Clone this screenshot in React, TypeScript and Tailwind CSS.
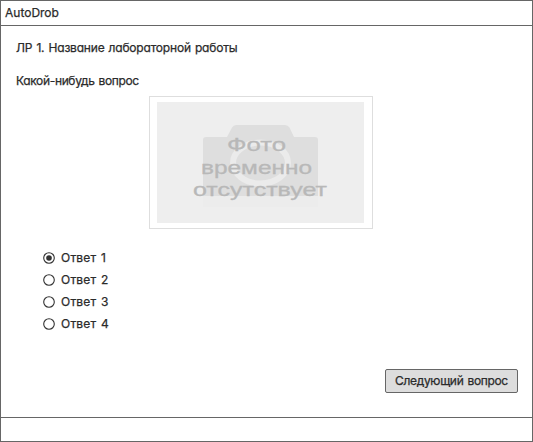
import { useState } from "react";

const answers = ["Ответ 1", "Ответ 2", "Ответ 3", "Ответ 4"];

function PhotoPlaceholder() {
  return (
    <div className="ml-[148px] h-[133px] w-[224px] border border-[#dedede] bg-white pl-[7px] pt-[5px]">
      <svg width="207" height="121" viewBox="157 102 207 121" className="block bg-[#eeeeee]">
        <path
          d="M206 137H227L232 127.500Q233.500 125 236 125H285Q288 125 289.500 127.500L294 137H315Q318 137 318 140V196H203V140Q203 137 206 137Z"
          fill="#dedede"
        />
        <rect x="203" y="196" width="115" height="11" fill="#ececec" />
        <ellipse cx="260.500" cy="163" rx="27.500" ry="20.500" fill="none" stroke="#ebebeb" strokeWidth="6" />
        <g fill="#b8b8b8" stroke="#b8b8b8" strokeWidth="0.3" fontFamily="'Liberation Sans', Arial, sans-serif" fontSize="18.500">
          <text x="227" y="151" textLength="59" lengthAdjust="spacingAndGlyphs">Фото</text>
          <text x="201" y="173.500" textLength="111" lengthAdjust="spacingAndGlyphs">временно</text>
          <text x="193" y="196" textLength="134" lengthAdjust="spacingAndGlyphs">отсутствует</text>
        </g>
      </svg>
    </div>
  );
}

export default function App() {
  const [selected, setSelected] = useState(0);
  return (
    <div className="flex h-[442px] w-[533px] flex-col border border-[#666666] bg-white font-['Inter','Liberation_Sans',sans-serif] text-[12px] font-normal leading-4 text-[#2b2b2b] [-webkit-text-stroke:0.25px_#2b2b2b] [font-feature-settings:'cv11']">
      <header className="h-[25px] border-b border-[#666666] pl-[4px] pt-[4px]">
        <span className="block whitespace-nowrap">AutoDrob</span>
      </header>
      <main className="flex h-[391px] flex-col">
        <h1 className="ml-[15px] mt-[14px] h-4 whitespace-nowrap tracking-[-0.2px] [word-spacing:1px]">
          <span>ЛР 1. Название лабораторной работы</span>
        </h1>
        <p className="ml-[15px] mt-[17px] h-4 whitespace-nowrap tracking-[-0.35px] [word-spacing:1px]">
          <span>Какой-нибудь вопрос</span>
        </p>
        <div className="mt-[7px]">
          <PhotoPlaceholder />
        </div>
        <div className="ml-[42px] mt-[18px] flex flex-col">
          {answers.map((label, i) => (
            <label key={label} className="flex h-[22px] items-center gap-[6px]">
              <input type="radio" name="answer" className="sr-only" checked={selected === i} onChange={() => setSelected(i)} />
              <svg width="12" height="12" viewBox="0 0 12 12">
                <circle cx="6" cy="6" r="5.300" fill="white" stroke="#333333" strokeWidth="1.100" />
                {selected === i && <circle cx="6" cy="6" r="2.800" fill="#333333" />}
              </svg>
              <span className="whitespace-nowrap tracking-[0.2px] [word-spacing:1px]">{label}</span>
            </label>
          ))}
        </div>
        <button className="ml-[384px] mt-[34px] h-[24px] w-[133px] whitespace-nowrap rounded-[2px] border border-[#666666] bg-[#dddddd] pb-px tracking-[-0.33px] [word-spacing:1px]">
          <span>Следующий вопрос</span>
        </button>
      </main>
      <footer className="grow border-t border-[#666666]" />
    </div>
  );
}
